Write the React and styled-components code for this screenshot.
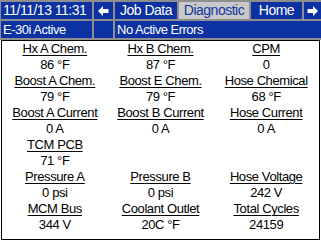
import React from "react";
import styled, { createGlobalStyle } from "styled-components";

const Global = createGlobalStyle`
  html, body { margin: 0; padding: 0; background: #ffffff; }
  body { width: 321px; height: 242px; overflow: hidden; font-family: "Liberation Sans", Arial, sans-serif; }
`;

const Screen = styled.div`
  width: 321px;
  height: 242px;
  background: #ffffff;
  display: flex;
  flex-direction: column;
`;

const Header = styled.div`
  display: grid;
  grid-template-columns: 91px 19px 62px 70px 51px 17px;
  grid-template-rows: 17px 17px;
  gap: 2px;
  padding: 2px 0 2px 1px;
  background: #8e8e8e;
`;

const Cell = styled.div`
  background: ${(p) => (p.$active ? "#c9c9c9" : "#0b31a2")};
  color: ${(p) => (p.$active ? "#1236a0" : "#ffffff")};
  font-size: ${(p) => (p.$small ? "13px" : "14px")};
  letter-spacing: -0.5px;
  line-height: 17px;
  white-space: nowrap;
  overflow: hidden;
  display: flex;
  align-items: center;
  justify-content: ${(p) => (p.$center ? "center" : "flex-start")};
  padding-left: ${(p) => (p.$center ? "0" : "2px")};
  grid-column: ${(p) => p.$span || "auto"};
`;

const Panel = styled.div`
  margin: 0 1px;
  height: 200px;
  box-sizing: border-box;
  border: 1px solid #000;
  padding-top: 0;
  display: grid;
  grid-template-columns: repeat(3, 1fr);
  align-content: start;
`;

const Item = styled.div`
  display: flex;
  flex-direction: column;
  align-items: center;
  font-size: 13px;
  letter-spacing: -0.4px;
  line-height: 16px;
  color: #000;
`;

const Label = styled.span`
  text-decoration: underline;
  text-underline-offset: 2px;
  text-decoration-thickness: 1px;
  white-space: nowrap;
`;

const Value = styled.span`
  white-space: nowrap;
`;

const Arrow = ({ dir }) => (
  <svg width="11" height="10" viewBox="0 0 11 10">
    <polygon
      fill="#fff"
      points="0,5 5,0 5,3 10.5,3 10.5,7 5,7 5,10"
      transform={dir === "right" ? "translate(11,0) scale(-1,1)" : undefined}
    />
  </svg>
);

const rows = [
  [["Hx A Chem.", "86 °F"], ["Hx B Chem.", "87 °F"], ["CPM", "0"]],
  [["Boost A Chem.", "79 °F"], ["Boost E Chem.", "79 °F"], ["Hose Chemical", "68 °F"]],
  [["Boost A Current", "0 A"], ["Boost B Current", "0 A"], ["Hose Current", "0 A"]],
  [["TCM PCB", "71 °F"], null, null],
  [["Pressure A", "0 psi"], ["Pressure B", "0 psi"], ["Hose Voltage", "242 V"]],
  [["MCM Bus", "344 V"], ["Coolant Outlet", "20C °F"], ["Total Cycles", "24159"]],
];

export default function App() {
  return (
    <>
      <Global />
      <Screen>
        <Header>
          <Cell>11/11/13 11:31</Cell>
          <Cell $center><Arrow dir="left" /></Cell>
          <Cell $center>Job Data</Cell>
          <Cell $center $active>Diagnostic</Cell>
          <Cell $center>Home</Cell>
          <Cell $center><Arrow dir="right" /></Cell>
          <Cell $small>E-30i Active</Cell>
          <Cell />
          <Cell $small $span="3 / -1">No Active Errors</Cell>
        </Header>
        <Panel>
          {rows.flatMap((r, i) =>
            r.map((it, j) => (
              <Item key={`${i}-${j}`}>
                {it && (
                  <>
                    <Label>{it[0]}</Label>
                    <Value>{it[1]}</Value>
                  </>
                )}
              </Item>
            ))
          )}
        </Panel>
      </Screen>
    </>
  );
}
